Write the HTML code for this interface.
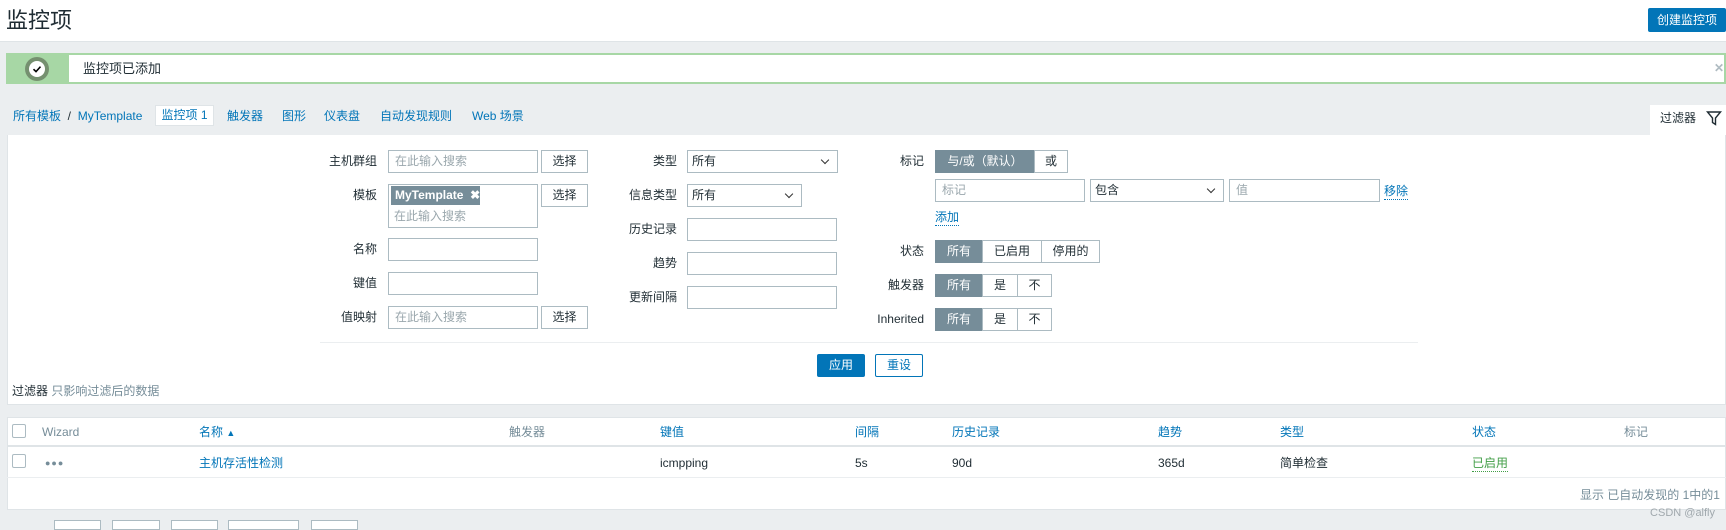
<!DOCTYPE html>
<html><head><meta charset="utf-8"><style>
*{margin:0;padding:0;box-sizing:border-box}
body{width:1726px;height:526px;overflow:hidden;background:#ebeef0;font-family:"Liberation Sans","Noto Sans CJK SC",sans-serif;font-size:12px;color:#1f2c33;position:relative}
.a{position:absolute;white-space:nowrap;line-height:16px}
.inp{position:absolute;border:1px solid #acbbc2;background:#fff;height:23px;padding:0 6px;line-height:21px;color:#9aa7ad}
.btn{position:absolute;border:1px solid #acbbc2;background:#fff;height:23px;line-height:21px;text-align:center;color:#1f2c33}
.sel{position:absolute;border:1px solid #acbbc2;background:#fff;height:23px;line-height:21px;padding:0 4px;color:#1f2c33}
.sel:after{content:"";position:absolute;right:9px;top:6px;width:5px;height:5px;border-right:1px solid #333;border-bottom:1px solid #333;transform:rotate(45deg)}
.lbl{position:absolute;text-align:right;width:120px;line-height:23px}
.seg{position:absolute;border:1px solid #acbbc2;background:#fff;height:23px;line-height:21px;text-align:center}
.on{background:#768d99;color:#fff;border-color:#768d99}
.blue{color:#0275b8}
.gray{color:#768d99}
</style></head><body>
<div class="a" style="left:0;top:0;width:1726px;height:42px;background:#fff;border-bottom:1px solid #dfe4e7"></div>
<div class="a" style="left:6px;top:8px;font-size:22px;line-height:26px;color:#1f2c33">监控项</div>
<div class="a" style="left:1648px;top:8px;width:78px;height:24px;background:#0275b8;color:#fff;line-height:24px;text-align:center;border-radius:2px">创建监控项</div>

<div class="a" style="left:6px;top:53px;width:1720px;height:31px;border:2px solid #a7d7a5;background:#fff"></div>
<div class="a" style="left:6px;top:53px;width:63px;height:31px;background:#a7d7a5"></div>
<div class="a" style="left:25px;top:57px;width:24px;height:24px;border-radius:50%;background:#75906f"></div>
<div class="a" style="left:29px;top:61px;width:16px;height:16px;border-radius:50%;background:#fff"></div>
<svg class="a" style="left:31px;top:63px" width="12" height="12" viewBox="0 0 12 12"><path d="M2.5 6.2 L5 8.6 L9.5 3.6" stroke="#000" stroke-width="1.6" fill="none"/></svg>
<div class="a" style="left:83px;top:61px;font-size:13px">监控项已添加</div>
<div class="a" style="left:1714px;top:60px;color:#b0bcc2;font-size:12px;font-weight:bold">✕</div>

<div class="a blue" style="left:13px;top:108px">所有模板 <span style="color:#1f2c33">&nbsp;/&nbsp;</span> MyTemplate</div>
<div class="a blue" style="left:155px;top:105px;width:59px;height:21px;background:#fff;border:1px solid #dfe4e7;line-height:19px;text-align:center">监控项 1</div>
<div class="a blue" style="left:227px;top:108px">触发器</div>
<div class="a blue" style="left:282px;top:108px">图形</div>
<div class="a blue" style="left:324px;top:108px">仪表盘</div>
<div class="a blue" style="left:380px;top:108px">自动发现规则</div>
<div class="a blue" style="left:472px;top:108px">Web 场景</div>
<div class="a" style="left:1650px;top:105px;width:76px;height:31px;background:#fff"></div>
<div class="a" style="left:1660px;top:110px">过滤器</div>
<svg class="a" style="left:1706px;top:110px" width="16" height="16" viewBox="0 0 16 16"><path d="M1.5 2 H14.5 L9.5 8 V14.5 L6.5 12.5 V8 Z" stroke="#1f2c33" stroke-width="1.4" fill="none"/></svg>

<div class="a" style="left:7px;top:135px;width:1719px;height:270px;background:#fff;border:1px solid #dfe4e7;border-top:none"></div>

<div class="lbl" style="left:257px;top:150px">主机群组</div>
<div class="inp" style="left:388px;top:150px;width:150px">在此输入搜索</div>
<div class="btn" style="left:541px;top:150px;width:47px">选择</div>
<div class="lbl" style="left:257px;top:184px">模板</div>
<div class="inp" style="left:388px;top:184px;width:150px;height:44px"></div>
<div class="a" style="left:391px;top:186px;width:89px;height:19px;background:#768d99;color:#fff;font-weight:bold;line-height:19px;padding-left:4px">MyTemplate&nbsp;&nbsp;✖</div>
<div class="a" style="left:394px;top:208px;color:#9aa7ad">在此输入搜索</div>
<div class="btn" style="left:541px;top:184px;width:47px">选择</div>
<div class="lbl" style="left:257px;top:238px">名称</div>
<div class="inp" style="left:388px;top:238px;width:150px"></div>
<div class="lbl" style="left:257px;top:272px">键值</div>
<div class="inp" style="left:388px;top:272px;width:150px"></div>
<div class="lbl" style="left:257px;top:306px">值映射</div>
<div class="inp" style="left:388px;top:306px;width:150px">在此输入搜索</div>
<div class="btn" style="left:541px;top:306px;width:47px">选择</div>

<div class="lbl" style="left:557px;top:150px">类型</div>
<div class="sel" style="left:687px;top:150px;width:151px">所有</div>
<div class="lbl" style="left:557px;top:184px">信息类型</div>
<div class="sel" style="left:687px;top:184px;width:115px">所有</div>
<div class="lbl" style="left:557px;top:218px">历史记录</div>
<div class="inp" style="left:687px;top:218px;width:150px"></div>
<div class="lbl" style="left:557px;top:252px">趋势</div>
<div class="inp" style="left:687px;top:252px;width:150px"></div>
<div class="lbl" style="left:557px;top:286px">更新间隔</div>
<div class="inp" style="left:687px;top:286px;width:150px"></div>

<div class="lbl" style="left:804px;top:150px">标记</div>
<div class="seg on" style="left:935px;top:150px;width:100px">与/或（默认）</div>
<div class="seg" style="left:1034px;top:150px;width:34px">或</div>
<div class="inp" style="left:935px;top:179px;width:150px">标记</div>
<div class="sel" style="left:1090px;top:179px;width:134px">包含</div>
<div class="inp" style="left:1229px;top:179px;width:151px">值</div>
<div class="a blue" style="left:1384px;top:183px;border-bottom:1px dotted #0275b8">移除</div>
<div class="a blue" style="left:935px;top:209px;border-bottom:1px dotted #0275b8">添加</div>
<div class="lbl" style="left:804px;top:240px">状态</div>
<div class="seg on" style="left:935px;top:240px;width:48px">所有</div>
<div class="seg" style="left:982px;top:240px;width:60px">已启用</div>
<div class="seg" style="left:1041px;top:240px;width:59px">停用的</div>
<div class="lbl" style="left:804px;top:274px">触发器</div>
<div class="seg on" style="left:935px;top:274px;width:48px">所有</div>
<div class="seg" style="left:982px;top:274px;width:36px">是</div>
<div class="seg" style="left:1017px;top:274px;width:35px">不</div>
<div class="lbl" style="left:804px;top:308px">Inherited</div>
<div class="seg on" style="left:935px;top:308px;width:48px">所有</div>
<div class="seg" style="left:982px;top:308px;width:36px">是</div>
<div class="seg" style="left:1017px;top:308px;width:35px">不</div>

<div class="a" style="left:320px;top:342px;width:1098px;height:1px;background:#ebeef0"></div>
<div class="a" style="left:817px;top:354px;width:48px;height:23px;background:#0275b8;color:#fff;line-height:23px;text-align:center;border-radius:2px">应用</div>
<div class="a" style="left:875px;top:354px;width:48px;height:23px;border:1px solid #0275b8;color:#0275b8;line-height:21px;text-align:center;border-radius:2px">重设</div>
<div class="a" style="left:12px;top:383px">过滤器 <span style="color:#768d99">只影响过滤后的数据</span></div>

<div class="a" style="left:7px;top:417px;width:1719px;height:93px;background:#fff;border:1px solid #dfe4e7"></div>
<div class="a" style="left:7px;top:445px;width:1719px;height:2px;background:#dfe4e7"></div>
<div class="a" style="left:7px;top:477px;width:1719px;height:1px;background:#ebeef0"></div>
<div class="a" style="left:12px;top:424px;width:14px;height:14px;border:1px solid #acbbc2;border-radius:2px"></div>
<div class="a" style="left:12px;top:454px;width:14px;height:14px;border:1px solid #acbbc2;border-radius:2px"></div>
<div class="a gray" style="left:42px;top:424px">Wizard</div>
<div class="a blue" style="left:199px;top:424px">名称 <span style="font-size:9px">▲</span></div>
<div class="a gray" style="left:509px;top:424px">触发器</div>
<div class="a blue" style="left:660px;top:424px">键值</div>
<div class="a blue" style="left:855px;top:424px">间隔</div>
<div class="a blue" style="left:952px;top:424px">历史记录</div>
<div class="a blue" style="left:1158px;top:424px">趋势</div>
<div class="a blue" style="left:1280px;top:424px">类型</div>
<div class="a blue" style="left:1472px;top:424px">状态</div>
<div class="a gray" style="left:1624px;top:424px">标记</div>
<div class="a gray" style="left:45px;top:455px;font-size:9px;letter-spacing:1px">●●●</div>
<div class="a blue" style="left:199px;top:455px">主机存活性检测</div>
<div class="a" style="left:660px;top:455px">icmpping</div>
<div class="a" style="left:855px;top:455px">5s</div>
<div class="a" style="left:952px;top:455px">90d</div>
<div class="a" style="left:1158px;top:455px">365d</div>
<div class="a" style="left:1280px;top:455px">简单检查</div>
<div class="a" style="left:1472px;top:455px;color:#429e47;border-bottom:1px dotted #429e47">已启用</div>
<div class="a gray" style="right:6px;top:487px">显示 已自动发现的 1中的1</div>
<div class="a" style="right:11px;top:505px;color:#a0a8ad;font-size:11px">CSDN @alfly</div>

<div class="a" style="left:54px;top:520px;width:47px;height:10px;border:1px solid #acbbc2;background:#fff"></div>
<div class="a" style="left:112px;top:520px;width:48px;height:10px;border:1px solid #acbbc2;background:#fff"></div>
<div class="a" style="left:171px;top:520px;width:47px;height:10px;border:1px solid #acbbc2;background:#fff"></div>
<div class="a" style="left:228px;top:520px;width:71px;height:10px;border:1px solid #acbbc2;background:#fff"></div>
<div class="a" style="left:311px;top:520px;width:47px;height:10px;border:1px solid #acbbc2;background:#fff"></div>
</body></html>
